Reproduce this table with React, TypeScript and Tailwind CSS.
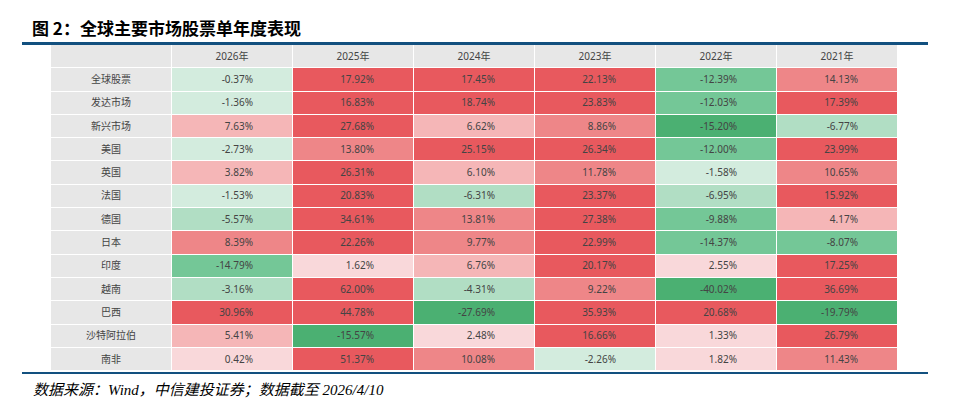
import { Fragment } from "react";

const R4 = "bg-[#e8595e]";
const R3 = "bg-[#ee8688]";
const R2 = "bg-[#f5b6b7]";
const R1 = "bg-[#f9d8da]";
const G1 = "bg-[#d3ecde]";
const G2 = "bg-[#b1dec4]";
const G3 = "bg-[#74c797]";
const G4 = "bg-[#4bb072]";

const years = ["2026年", "2025年", "2024年", "2023年", "2022年", "2021年"];

type Cell = [string, string];

const rows: { name: string; cells: Cell[] }[] = [
  { name: "全球股票", cells: [["-0.37%", G1], ["17.92%", R4], ["17.45%", R4], ["22.13%", R4], ["-12.39%", G3], ["14.13%", R3]] },
  { name: "发达市场", cells: [["-1.36%", G1], ["16.83%", R4], ["18.74%", R4], ["23.83%", R4], ["-12.03%", G3], ["17.39%", R4]] },
  { name: "新兴市场", cells: [["7.63%", R2], ["27.68%", R4], ["6.62%", R2], ["8.86%", R3], ["-15.20%", G4], ["-6.77%", G2]] },
  { name: "美国", cells: [["-2.73%", G1], ["13.80%", R3], ["25.15%", R4], ["26.34%", R4], ["-12.00%", G3], ["23.99%", R4]] },
  { name: "英国", cells: [["3.82%", R2], ["26.31%", R4], ["6.10%", R2], ["11.78%", R3], ["-1.58%", G1], ["10.65%", R3]] },
  { name: "法国", cells: [["-1.53%", G1], ["20.83%", R4], ["-6.31%", G2], ["23.37%", R4], ["-6.95%", G2], ["15.92%", R4]] },
  { name: "德国", cells: [["-5.57%", G2], ["34.61%", R4], ["13.81%", R3], ["27.38%", R4], ["-9.88%", G3], ["4.17%", R2]] },
  { name: "日本", cells: [["8.39%", R3], ["22.26%", R4], ["9.77%", R3], ["22.99%", R4], ["-14.37%", G3], ["-8.07%", G3]] },
  { name: "印度", cells: [["-14.79%", G3], ["1.62%", R1], ["6.76%", R2], ["20.17%", R4], ["2.55%", R1], ["17.25%", R4]] },
  { name: "越南", cells: [["-3.16%", G2], ["62.00%", R4], ["-4.31%", G2], ["9.22%", R3], ["-40.02%", G4], ["36.69%", R4]] },
  { name: "巴西", cells: [["30.96%", R4], ["44.78%", R4], ["-27.69%", G4], ["35.93%", R4], ["20.68%", R4], ["-19.79%", G4]] },
  { name: "沙特阿拉伯", cells: [["5.41%", R2], ["-15.57%", G4], ["2.48%", R1], ["16.66%", R4], ["1.33%", R1], ["26.79%", R4]] },
  { name: "南非", cells: [["0.42%", R1], ["51.37%", R4], ["10.08%", R3], ["-2.26%", G1], ["1.82%", R1], ["11.43%", R3]] },
];

const cellFont = { fontFamily: '"Noto Sans", "Noto Sans CJK SC", sans-serif' };

export default function App() {
  return (
    <div className="w-[954px] h-[412px] bg-white pt-[17px] overflow-hidden">
      <h1
        className="pl-[32px] text-[17px] leading-[22px] font-bold text-black"
        style={{ fontFamily: '"Noto Sans CJK SC", sans-serif' }}
      >
        图&nbsp;2：全球主要市场股票单年度表现
      </h1>
      <div className="ml-[22px] mt-[3px] w-[906px] h-[3px] bg-[#12507f]" />

      <div
        className="ml-[51px] w-[846px] grid grid-cols-[repeat(7,120px)] gap-px bg-white text-[10px] text-[#444]"
        style={cellFont}
      >
        <div className="h-[22.3px] bg-[#e7e7e7]" />
        {years.map((y) => (
          <div key={y} className="h-[22.3px] bg-[#e7e7e7] flex items-center justify-center">
            {y}
          </div>
        ))}
        {rows.map((r) => (
          <Fragment key={r.name}>
            <div className="h-[22.3px] bg-[#e7e7e7] flex items-center justify-center">{r.name}</div>
            {r.cells.map(([v, bg], i) => (
              <div key={i} className={`h-[22.3px] ${bg} flex items-center justify-end pr-[39px]`}>
                {v}
              </div>
            ))}
          </Fragment>
        ))}
      </div>

      <div className="ml-[22px] mt-[2px] w-[906px] h-[2px] bg-[#12507f]" />
      <p
        className="pl-[33px] mt-[6px] text-[15px] leading-[20px] italic text-black"
        style={{ fontFamily: '"Liberation Serif", "Noto Sans CJK SC", serif' }}
      >
        数据来源：Wind，中信建投证券；数据截至 2026/4/10
      </p>
    </div>
  );
}
